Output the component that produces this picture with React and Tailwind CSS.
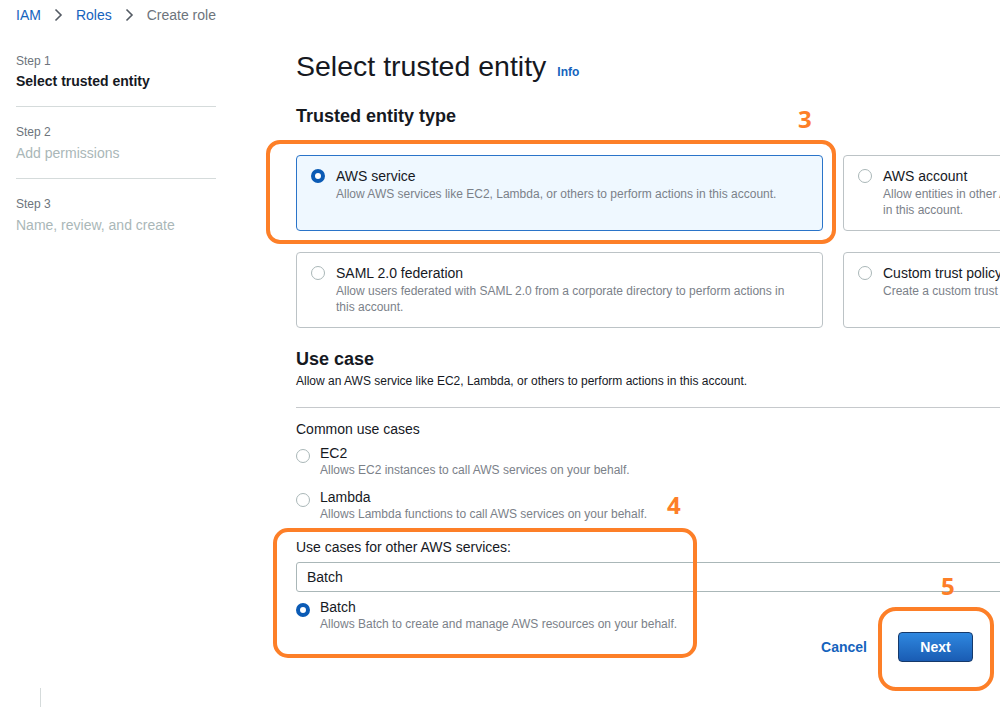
import React from "react";

function Radio({ checked }) {
  return checked ? (
    <span className="mt-[3px] h-[14px] w-[14px] shrink-0 rounded-full border-[4px] border-[#0b5bb5] bg-white" />
  ) : (
    <span className="mt-[3px] h-[14px] w-[14px] shrink-0 rounded-full border border-[#aab7b8] bg-white" />
  );
}

function Card({ checked, title, desc }) {
  return (
    <div
      className={
        "flex h-[76px] gap-[11px] rounded-[4px] border pl-[14px] pr-[30px] pt-[10px] " +
        (checked ? "border-[#2a74c9] bg-[#eff8ff]" : "border-[#bcc3c6] bg-white")
      }
    >
      <Radio checked={checked} />
      <div className="min-w-0">
        <div className="text-[14px] leading-[20px] text-[#16191f]">{title}</div>
        <div className="text-[12px] leading-[16px] text-[#7b8189]">{desc}</div>
      </div>
    </div>
  );
}

function UseCase({ checked, title, desc }) {
  return (
    <div className="flex gap-[10px]">
      <span className="mt-[2px] flex">
        <Radio checked={checked} />
      </span>
      <div>
        <div className="text-[14px] leading-[18px] text-[#16191f]">{title}</div>
        <div className="text-[12px] leading-[16px] text-[#7b8189]">{desc}</div>
      </div>
    </div>
  );
}

function Chevron() {
  return (
    <svg width="9" height="14" viewBox="0 0 9 14" className="mx-[13px]">
      <path d="M1.5 1.5 L7 7 L1.5 12.5" fill="none" stroke="#545b64" strokeWidth="1.6" />
    </svg>
  );
}

export default function App() {
  return (
    <div className="relative h-[707px] w-[1000px] overflow-hidden bg-white font-['Liberation_Sans',Arial,sans-serif]">
      {/* breadcrumb */}
      <div className="flex h-[30px] items-center pl-[16px] text-[14px]">
        <span className="text-[#1563bd]">IAM</span>
        <Chevron />
        <span className="text-[#1563bd]">Roles</span>
        <Chevron />
        <span className="text-[#6d747c]">Create role</span>
      </div>

      <div className="flex">
        {/* side nav */}
        <nav className="ml-[16px] flex w-[200px] shrink-0 flex-col pt-[23px]">
          <div className="border-b border-[#d5dbdb] pb-[15px]">
            <div className="text-[12px] leading-[16px] text-[#6d747c]">Step 1</div>
            <div className="mt-[2px] text-[14px] font-bold leading-[20px] text-[#16191f]">Select trusted entity</div>
          </div>
          <div className="border-b border-[#d5dbdb] pb-[15px] pt-[17px]">
            <div className="text-[12px] leading-[16px] text-[#6d747c]">Step 2</div>
            <div className="mt-[3px] text-[14px] leading-[20px] text-[#aab7b8]">Add permissions</div>
          </div>
          <div className="pt-[17px]">
            <div className="text-[12px] leading-[16px] text-[#6d747c]">Step 3</div>
            <div className="mt-[3px] text-[14px] leading-[20px] text-[#aab7b8]">Name, review, and create</div>
          </div>
          <div className="ml-[24px] mt-[453px] h-[20px] w-px bg-[#d5dbdb]" />
        </nav>

        {/* main */}
        <main className="ml-[80px] w-[1074px] shrink-0 pt-[18px]">
          <div className="flex items-baseline">
            <h1 className="text-[28.5px] leading-[36px] text-[#16191f]">Select trusted entity</h1>
            <span className="ml-[11px] text-[12px] font-bold text-[#1563bd]">Info</span>
          </div>

          <h2 className="mt-[20px] text-[18px] font-bold leading-[24px] text-[#16191f]">Trusted entity type</h2>

          <div className="mt-[27px] grid grid-cols-[527px_527px] gap-x-[20px] gap-y-[21px]">
            <Card
              checked
              title="AWS service"
              desc="Allow AWS services like EC2, Lambda, or others to perform actions in this account."
            />
            <Card
              title="AWS account"
              desc={
                <>
                  <span className="whitespace-nowrap">
                    Allow entities in other AWS accounts belonging to you or a 3rd party to perform actions
                  </span>{" "}
                  in this account.
                </>
              }
            />
            <Card
              title="SAML 2.0 federation"
              desc="Allow users federated with SAML 2.0 from a corporate directory to perform actions in this account."
            />
            <Card
              title="Custom trust policy"
              desc="Create a custom trust policy to enable others to perform actions in this account."
            />
          </div>

          <h2 className="mt-[19px] text-[18px] font-bold leading-[24px] text-[#16191f]">Use case</h2>
          <div className="mt-[2px] text-[12px] leading-[16px] text-[#16191f]">
            Allow an AWS service like EC2, Lambda, or others to perform actions in this account.
          </div>
          <div className="mt-[18px] border-t border-[#c6c9cc]" />

          <div className="mt-[11px] text-[14px] leading-[20px] text-[#16191f]">Common use cases</div>
          <div className="mt-[5px] flex flex-col gap-[10px]">
            <UseCase title="EC2" desc="Allows EC2 instances to call AWS services on your behalf." />
            <UseCase title="Lambda" desc="Allows Lambda functions to call AWS services on your behalf." />
          </div>

          <div className="mt-[15px] text-[14px] leading-[20px] text-[#16191f]">Use cases for other AWS services:</div>
          <div className="mt-[5px] flex h-[30px] items-center rounded-[3px] border border-[#aab7b8] pl-[10px] text-[14px] text-[#16191f]">
            Batch
          </div>
          <div className="mt-[6px]">
            <UseCase checked title="Batch" desc="Allows Batch to create and manage AWS resources on your behalf." />
          </div>

          <div className="flex w-[677px] items-center justify-end gap-[31px]">
            <span className="text-[14px] font-bold text-[#1563bd]">Cancel</span>
            <button className="h-[30px] w-[75px] rounded-[4px] border border-[#16396a] bg-gradient-to-b from-[#2f88e0] to-[#1a5cb3] text-[14px] font-bold text-white">
              Next
            </button>
          </div>
        </main>
      </div>

      {/* annotations */}
      <div className="pointer-events-none absolute left-[266px] top-[140px] h-[104px] w-[570px] rounded-[14px] border-[4px] border-[#fd7f28]" />
      <div className="pointer-events-none absolute left-[273px] top-[528px] h-[130px] w-[424px] rounded-[15px] border-[4px] border-[#fd7f28]" />
      <div className="pointer-events-none absolute left-[878px] top-[607px] h-[84px] w-[116px] rounded-[18px] border-[4px] border-[#fd7f28]" />
      <span className="absolute left-[798px] top-[104px] text-[24px] font-bold leading-[30px] text-[#fd7f28] font-['Open_Sans',sans-serif]">3</span>
      <span className="absolute left-[667px] top-[490px] text-[24px] font-bold leading-[30px] text-[#fd7f28] font-['Open_Sans',sans-serif]">4</span>
      <span className="absolute left-[941px] top-[571px] text-[24px] font-bold leading-[30px] text-[#fd7f28] font-['Open_Sans',sans-serif]">5</span>
    </div>
  );
}
